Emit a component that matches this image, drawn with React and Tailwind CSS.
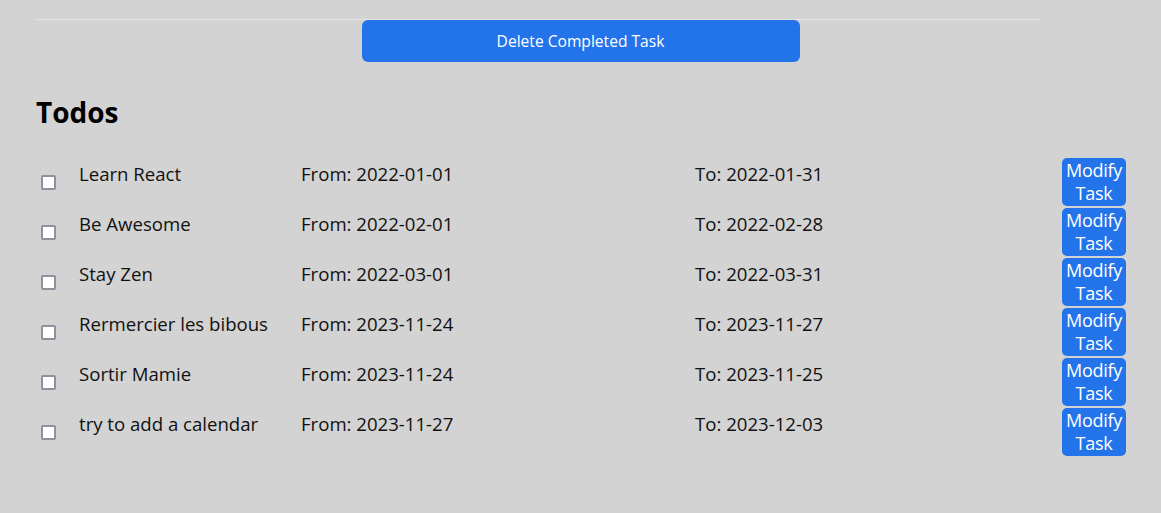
import React from "react";

const todos = [
  { id: 1, title: "Learn React", from: "2022-01-01", to: "2022-01-31" },
  { id: 2, title: "Be Awesome", from: "2022-02-01", to: "2022-02-28" },
  { id: 3, title: "Stay Zen", from: "2022-03-01", to: "2022-03-31" },
  { id: 4, title: "Rermercier les bibous", from: "2023-11-24", to: "2023-11-27" },
  { id: 5, title: "Sortir Mamie", from: "2023-11-24", to: "2023-11-25" },
  { id: 6, title: "try to add a calendar", from: "2023-11-27", to: "2023-12-03" },
];

const App = () => {
  return (
    <div
      className="min-h-[513px] bg-[#d3d3d3] text-[#111] px-[36px] pt-[19px]"
      style={{ fontFamily: '"Open Sans", "Noto Sans", sans-serif' }}
    >
      {/* Header actions */}
      <div className="w-[1004px] border-t border-[#e4e4e4]" />
      <div className="flex justify-center w-[1089px]">
        <button className="w-[438px] h-[42px] pt-[2px] rounded-[6px] bg-[#2373eb] text-white text-[15.6px]">
          Delete Completed Task
        </button>
      </div>

      <h2 className="mt-[31px] text-[28px] font-bold leading-[38px] text-black">Todos</h2>

      {/* Todo list */}
      <div className="mt-[27px] flex flex-col gap-[2px]">
        {todos.map((todo) => (
          <div key={todo.id} className="flex items-start h-[48px]">
            <div className="w-[43px] shrink-0 pt-[17px] pl-[5px]">
              <input
                type="checkbox"
                className="w-[15px] h-[15px] m-0 appearance-none bg-white border-2 border-[#8f8f9d] rounded-[2px] block"
              />
            </div>
            <div className="w-[222px] shrink-0 pt-[3px] text-[18.6px] leading-[26px]">{todo.title}</div>
            <div className="w-[394px] shrink-0 pt-[3px] text-[18.6px] leading-[26px]">From: {todo.from}</div>
            <div className="w-[367px] shrink-0 pt-[3px] text-[18.6px] leading-[26px]">To: {todo.to}</div>
            <button className="w-[64px] shrink-0 h-[48px] rounded-[5px] bg-[#2373eb] text-white text-[18px] leading-[23px] tracking-[-0.3px]">
              Modify
              <br />
              Task
            </button>
          </div>
        ))}
      </div>
    </div>
  );
};

export default App;
